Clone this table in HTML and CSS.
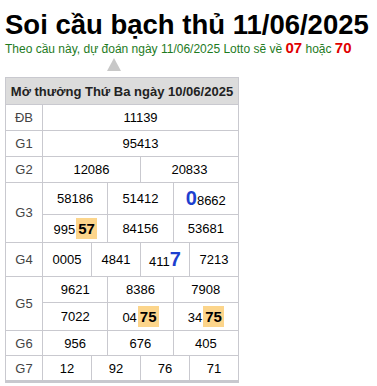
FILE: index.html
```html
<!DOCTYPE html>
<html lang="vi">
<head>
<meta charset="utf-8">
<title>Soi cầu bạch thủ</title>
<link rel="stylesheet" href="styles.css">
</head>
<body>
<h1 class="title">Soi cầu bạch thủ 11/06/2025</h1>
<p class="predict">Theo cầu này, dự đoán ngày 11/06/2025 Lotto sẽ về <b class="hot">07</b> hoặc <b class="hot">70</b></p>
<div class="arrow"></div>
<table class="kq">
  <colgroup>
    <col class="c-label">
    <col><col><col><col><col><col><col><col><col><col><col><col>
  </colgroup>
  <thead>
    <tr><th colspan="13" class="head">Mở thưởng Thứ Ba ngày 10/06/2025</th></tr>
  </thead>
  <tbody>
    <tr class="r26"><td class="lbl">ĐB</td><td colspan="12">11139</td></tr>
    <tr class="r26"><td class="lbl">G1</td><td colspan="12">95413</td></tr>
    <tr class="r26"><td class="lbl">G2</td><td colspan="6">12086</td><td colspan="6">20833</td></tr>
    <tr class="r32"><td class="lbl" rowspan="2">G3</td><td colspan="4">58186</td><td colspan="4">51412</td><td colspan="4"><span class="pick">0</span>8662</td></tr>
    <tr class="r28"><td colspan="4">995<span class="mark">57</span></td><td colspan="4">84156</td><td colspan="4">53681</td></tr>
    <tr class="r33"><td class="lbl">G4</td><td colspan="3">0005</td><td colspan="3">4841</td><td colspan="3">411<span class="pick">7</span></td><td colspan="3">7213</td></tr>
    <tr class="r26"><td class="lbl" rowspan="2">G5</td><td colspan="4">9621</td><td colspan="4">8386</td><td colspan="4">7908</td></tr>
    <tr class="r28"><td colspan="4">7022</td><td colspan="4">04<span class="mark">75</span></td><td colspan="4">34<span class="mark">75</span></td></tr>
    <tr class="r25"><td class="lbl">G6</td><td colspan="4">956</td><td colspan="4">676</td><td colspan="4">405</td></tr>
    <tr class="r25"><td class="lbl">G7</td><td colspan="3">12</td><td colspan="3">92</td><td colspan="3">76</td><td colspan="3">71</td></tr>
  </tbody>
</table>
</body>
</html>
```
FILE: styles.css
```css
html, body {
  margin: 0;
  padding: 0;
  background: #ffffff;
}
body {
  padding: 10px 0 0 5px;
  font-family: "Liberation Sans", Arial, sans-serif;
  color: #000;
}
.title {
  margin: 0;
  font-size: 27.5px;
  line-height: 30px;
  font-weight: bold;
  color: #000;
}
.predict {
  margin: 0;
  font-size: 12px;
  line-height: 15px;
  color: #1e7b1e;
}
.hot {
  color: #e00000;
  font-size: 15px;
}
.arrow {
  width: 0;
  height: 0;
  margin: 1px 0 0 102px;
  border-left: 7px solid transparent;
  border-right: 7px solid transparent;
  border-bottom: 13px solid #c8c8c8;
}
.kq {
  margin-top: 6px;
  width: 234px;
  border-collapse: collapse;
  table-layout: fixed;
  border-bottom: 3px solid #c8c8ce;
}
.c-label { width: 37px; }
.kq th, .kq td {
  border: 1px solid #c9c9cf;
  padding: 0;
  text-align: center;
  vertical-align: middle;
  font-size: 13px;
  white-space: nowrap;
}
.head {
  height: 26px;
  background: #dcdcdc;
  font-weight: bold;
  color: #222;
  font-size: 13px;
}
.lbl {
  color: #444;
  font-size: 13px;
}
.r25 td { height: 24px; }
.r26 td { height: 25px; }
.r28 td { height: 27px; }
.r32 td { height: 31px; }
.r33 td { height: 33px; }
.pick {
  color: #1d3fcf;
  font-weight: bold;
  font-size: 20px;
}
.mark {
  display: inline-block;
  margin-left: 1px;
  padding: 3px 2px;
  line-height: 15px;
  background: #fcd58b;
  font-weight: bold;
  font-size: 15px;
  color: #000;
  vertical-align: baseline;
}
```
